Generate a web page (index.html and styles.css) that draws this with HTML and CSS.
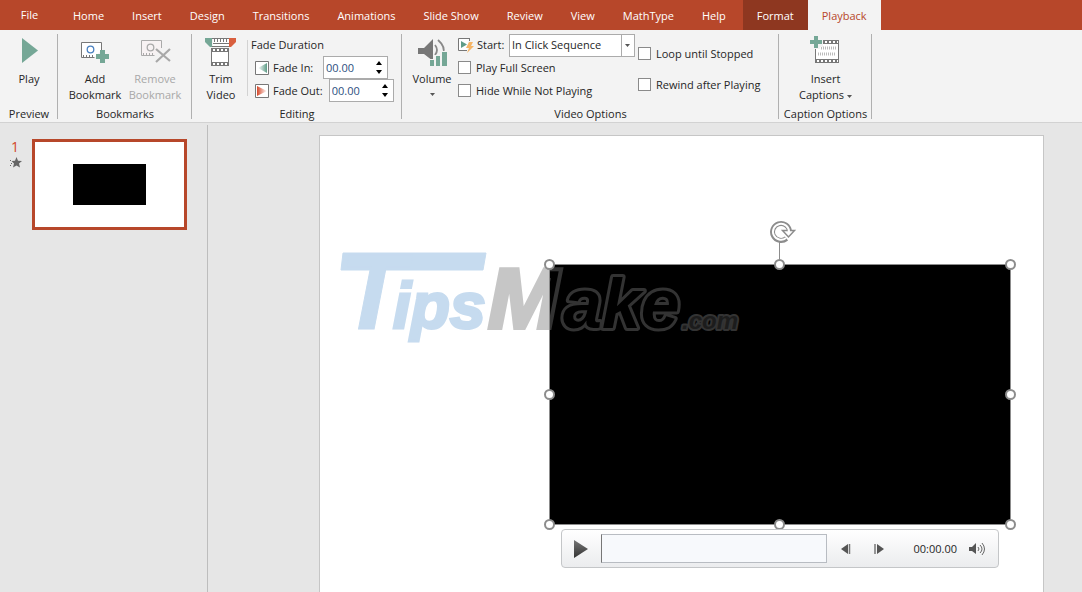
FILE: index.html
```
<!DOCTYPE html>
<html lang="en">
<head>
  <meta charset="UTF-8" />
  <meta name="viewport" content="width=device-width, initial-scale=1.0"/>
  <title>Playback</title>
  <link rel="stylesheet" href="styles.css">
</head>
<body>
  <nav class="tabs">
    <a href="#" class="tab file">File</a>
    <a href="#" class="tab">Home</a>
    <a href="#" class="tab">Insert</a>
    <a href="#" class="tab">Design</a>
    <a href="#" class="tab">Transitions</a>
    <a href="#" class="tab">Animations</a>
    <a href="#" class="tab">Slide Show</a>
    <a href="#" class="tab">Review</a>
    <a href="#" class="tab">View</a>
    <a href="#" class="tab">MathType</a>
    <a href="#" class="tab">Help</a>
    <a href="#" class="tab format">Format</a>
    <a href="#" class="tab active">Playback</a>
  </nav>

  <div class="ribbon">
    <section class="group preview">
      <div class="group-body">
        <button class="tool">
          <svg width="32" height="32" viewBox="0 0 32 32"><path d="M9 4v25l16-12.500z" fill="#75a796"/></svg>
          <span>Play</span>
        </button>
      </div>
      <h2>Preview</h2>
    </section>

    <section class="group bookmarks">
      <div class="group-body">
        <button class="tool">
          <svg width="32" height="32" viewBox="0 0 32 32">
            <path d="M22.500 16V8.500h-20v15h13" fill="#fff" stroke="#777"/>
            <path d="M4.500 21v2M7.500 21v2M10.500 21v2M13.500 21v2" stroke="#777"/>
            <circle cx="11.500" cy="15.500" r="3.300" fill="none" stroke="#4a80c0" stroke-width="1.300"/>
            <path d="M21 16h5v4h4v5h-4v4h-5v-4h-4v-5h4z" fill="#75a796"/>
          </svg>
          <span>Add<br>Bookmark</span>
        </button>
        <button class="tool" disabled>
          <svg width="32" height="32" viewBox="0 0 32 32">
            <path d="M22.500 14V6.500h-20v15h13" fill="#f7f2f3" stroke="#aaa"/>
            <path d="M4.500 19v2M7.500 19v2M10.500 19v2M13.500 19v2" stroke="#aaa"/>
            <circle cx="11.500" cy="13.500" r="3.300" fill="none" stroke="#aaa" stroke-width="1.300"/>
            <path d="M17 15l14 12M31 15L17 28" stroke="#a8a8a8" stroke-width="2.200"/>
          </svg>
          <span>Remove<br>Bookmark</span>
        </button>
      </div>
      <h2>Bookmarks</h2>
    </section>

    <section class="group editing">
      <div class="group-body">
        <button class="tool">
          <svg width="32" height="32" viewBox="0 0 32 32">
            <path d="M6 4.500h20M7 12.500h18" stroke="#777"/>
            <path d="M8 5h16v7H8z" fill="#fff"/>
            <path d="M9.500 5v3M12.500 5v3M15.500 5v3M18.500 5v3M21.500 5v3" stroke="#777"/>
            <path d="M8 9.500h16" stroke="#777"/>
            <path d="M0 4h7v9H5L0 8z" fill="#75a796"/>
            <path d="M31 4h-7v9h2l5-5z" fill="#d95f3e"/>
            <path d="M6 14h18v18H6z" fill="#777"/>
            <path d="M7 18h16v10H7z" fill="#fff"/>
            <path d="M8 16h15M8 30h15" stroke="#fff" stroke-width="2" stroke-dasharray="2 2"/>
          </svg>
          <span>Trim<br>Video</span>
        </button>
        <div class="fades">
          <h3>Fade Duration</h3>
          <div class="fade-row">
            <svg width="14" height="14" viewBox="0 0 14 14">
              <defs><linearGradient id="fin"><stop offset="0" stop-color="#fff"/><stop offset="1" stop-color="#5f9c87"/></linearGradient></defs>
              <path d="M.5.5h13v13H.5z" fill="#fff" stroke="#777"/><path d="M12 2v10L3 7z" fill="url(#fin)"/>
            </svg>
            <label for="fade-in">Fade In:</label>
            <div class="spinner">
              <input id="fade-in" type="text" value="00.00">
              <div class="arrows">
                <button aria-label="Increase fade in"><svg width="6" height="4"><path d="M0 4l3-4 3 4z"/></svg></button>
                <button aria-label="Decrease fade in"><svg width="6" height="4"><path d="M0 0l3 4 3-4z"/></svg></button>
              </div>
            </div>
          </div>
          <div class="fade-row">
            <svg width="14" height="14" viewBox="0 0 14 14">
              <defs><linearGradient id="fout"><stop offset="0" stop-color="#d5482a"/><stop offset="1" stop-color="#fff"/></linearGradient></defs>
              <path d="M.5.5h13v13H.5z" fill="#fff" stroke="#777"/><path d="M2 2v10l10-5z" fill="url(#fout)"/>
            </svg>
            <label for="fade-out">Fade Out:</label>
            <div class="spinner">
              <input id="fade-out" type="text" value="00.00">
              <div class="arrows">
                <button aria-label="Increase fade out"><svg width="6" height="4"><path d="M0 4l3-4 3 4z"/></svg></button>
                <button aria-label="Decrease fade out"><svg width="6" height="4"><path d="M0 0l3 4 3-4z"/></svg></button>
              </div>
            </div>
          </div>
        </div>
      </div>
      <h2>Editing</h2>
    </section>

    <section class="group video">
      <div class="group-body">
        <button class="tool">
          <svg width="32" height="32" viewBox="0 0 32 32">
            <path d="M2 14h6l9-9v22l-9-7H2z" fill="#777"/>
            <path d="M19 11q4 5 0 10M22 6q8 7 5 14" fill="none" stroke="#888" stroke-width="1.800"/>
            <path d="M13 25h6v9h-6zM19 21h6v12h-6zM25 17h6v16h-6z" fill="#f3f3f3"/>
            <path d="M14 26h4v7h-4zM20 22h4v10h-4zM26 18h5v14h-5z" fill="#75a796"/>
          </svg>
          <span>Volume</span>
          <svg class="caret" width="5" height="3"><path d="M0 0h5L2.500 3z"/></svg>
        </button>
        <div class="options">
          <div class="start-row">
            <svg width="16" height="16" viewBox="0 0 16 16">
              <path d="M11 1.500H.5v12H9" fill="#fff" stroke="#777"/><path d="M11.500 1v3" stroke="#777"/>
              <path d="M3 4v7l6-3.500z" fill="#5f9c87"/>
              <path d="M11 5h4l-2 4h3l-7 7 2-5H8z" fill="#f6b565"/>
            </svg>
            <label for="start">Start:</label>
            <div class="dropdown">
              <select id="start"><option>In Click Sequence</option></select>
              <svg width="5" height="3"><path d="M0 0h5L2.500 3z"/></svg>
            </div>
          </div>
          <label class="check"><input type="checkbox">Play Full Screen</label>
          <label class="check"><input type="checkbox">Hide While Not Playing</label>
        </div>
        <div class="options loops">
          <label class="check"><input type="checkbox">Loop until Stopped</label>
          <label class="check"><input type="checkbox">Rewind after Playing</label>
        </div>
      </div>
      <h2>Video Options</h2>
    </section>

    <section class="group captions">
      <div class="group-body">
        <button class="tool">
          <svg width="32" height="32" viewBox="0 0 32 32">
            <path d="M5 6h24v23H5z" fill="#777"/>
            <path d="M6 10h22v15H6z" fill="#fff"/>
            <path d="M7 8h21M7 27h21" stroke="#fff" stroke-width="2" stroke-dasharray="2 2"/>
            <path d="M11 14h15M8 20h18" stroke="#bbb" stroke-width="3" stroke-dasharray="1 1"/>
            <path d="M2 1h8v4h3v8h-3v2H2z" fill="#f3f3f3"/>
            <path d="M4 2h4v4h4v4H8v4H4v-4H0V6h4z" fill="#75a796"/>
          </svg>
          <span>Insert<br>Captions <svg class="inline-caret" width="5" height="3"><path d="M0 0h5L2.500 3z"/></svg></span>
        </button>
      </div>
      <h2>Caption Options</h2>
    </section>
  </div>

  <main class="workspace">
    <aside class="slides">
      <div class="slide-info">
        <span class="number">1</span>
        <svg width="12" height="11" viewBox="0 0 12 11"><path d="M6.500 0L8 3.700l4 .3-3 2.600 1 4-3.500-2.200-3.500 2.200 1-4L1.500 4 5 3.700z" fill="#666"/><path d="M0 3h1v1H0zM1 6h1v1H1zM0 8h1v1H0z" fill="#666"/></svg>
      </div>
      <button class="thumb" aria-label="Slide 1"><span class="thumb-video"></span></button>
    </aside>

    <div class="stage">
      <div class="slide">
        <div class="movie"></div>
        <svg class="watermark" width="420" height="130" viewBox="330 220 420 130">
          <defs>
            <linearGradient id="mfill" gradientUnits="userSpaceOnUse" x1="549" y1="0" x2="550" y2="0">
              <stop offset="0" stop-color="#c6c6c6"/><stop offset="1" stop-color="#000"/>
            </linearGradient>
            <linearGradient id="mline" gradientUnits="userSpaceOnUse" x1="549" y1="0" x2="550" y2="0">
              <stop offset="0" stop-color="#c6c6c6"/><stop offset="1" stop-color="#333"/>
            </linearGradient>
          </defs>
          <path class="blue" d="M343 253h143l-3 17H341z"/>
          <text>
            <tspan class="blue" x="339" y="329" font-size="108">T</tspan><tspan class="blue" x="393" y="328" font-size="64" stroke-width="3">ips</tspan><tspan x="488" y="328" font-size="86" fill="url(#mfill)" stroke="url(#mline)" stroke-width="4">M</tspan><tspan class="dark" x="563" y="328" font-size="70" stroke-width="6">ake</tspan><tspan class="dark com" x="682" y="329" font-size="24" stroke-width="4">.com</tspan>
          </text>
        </svg>
        <div class="selection">
          <svg class="rotate" width="28" height="24" viewBox="0 0 28 24">
            <path d="M17.500 18.500A8.500 8.500 0 1 1 20.500 11" fill="none" stroke="#8c8c8c" stroke-width="5"/>
            <path d="M13.500 10.500h12l-6 6.500z" fill="#fff" stroke="#8c8c8c" stroke-width="1.500"/>
            <path d="M17 18A8 8 0 1 1 20 12" fill="none" stroke="#fff" stroke-width="2"/>
          </svg>
          <i class="stem"></i>
          <i class="handle nw"></i><i class="handle n"></i><i class="handle ne"></i>
          <i class="handle w"></i><i class="handle e"></i>
          <i class="handle sw"></i><i class="handle s"></i><i class="handle se"></i>
        </div>
        <div class="player">
          <button aria-label="Play"><svg width="14" height="18"><defs><linearGradient id="pg" x2="0" y2="1"><stop offset="0" stop-color="#777"/><stop offset="1" stop-color="#333"/></linearGradient></defs><path d="M0 0l14 9-14 9z" fill="url(#pg)"/></svg></button>
          <div class="seek"></div>
          <button aria-label="Step back"><svg width="10" height="10"><path d="M7 0v10L0 5z" fill="#555"/><path d="M8.500 0v10" stroke="#777" stroke-width="1.500"/></svg></button>
          <button aria-label="Step forward"><svg width="10" height="10"><path d="M3 0v10l7-5z" fill="#555"/><path d="M1 0v10" stroke="#777" stroke-width="1.500"/></svg></button>
          <time>00:00.00</time>
          <button aria-label="Mute"><svg width="16" height="12" viewBox="0 0 16 12"><path d="M0 4h3l4-4v11L3 8H0z" fill="#555"/><path d="M9 4q2 2 0 4M11 2q4 4 0 8M13 0q5 6 0 12" fill="none" stroke="#666"/></svg></button>
        </div>
      </div>
    </div>
  </main>
</body>
</html>
```
FILE: styles.css
```
* {
  box-sizing: border-box;
}

body {
  margin: 0;
  min-height: 100vh;
  display: flex;
  flex-direction: column;
  font-family: "Open Sans", "Noto Sans", sans-serif;
  font-size: 11px;
  line-height: 16px;
  color: #262626;
  background: #e6e6e6;
}

h2, h3 {
  margin: 0;
  font-size: 11px;
  font-weight: normal;
}

button {
  padding: 0;
  border: none;
  background: none;
  font: inherit;
  color: inherit;
}

svg {
  display: block;
}

/* tabs */
.tabs {
  display: flex;
  height: 30px;
  background: #b7472a;
}

.tab {
  padding: 0 14px;
  line-height: 32px;
  color: white;
  text-decoration: none;
  white-space: nowrap;
}

.file {
  width: 59px;
  padding: 0;
  line-height: 30px;
  text-align: center;
}

.format {
  margin-left: 3px;
  background: #8e3720;
}

.active {
  background: #f3f3f3;
  color: #b7472a;
}

/* ribbon */
.ribbon {
  display: flex;
  height: 93px;
  padding-top: 4px;
  background: #f3f3f3;
  border-bottom: 1px solid #d2d2d2;
}

.group {
  position: relative;
  display: flex;
  flex-direction: column;
  flex-shrink: 0;
  white-space: nowrap;
}

.group::after {
  content: "";
  position: absolute;
  top: 0;
  right: 0;
  bottom: 3px;
  border-right: 1px solid #b0b0b0;
}

.group-body {
  flex: 1;
  display: flex;
  justify-content: center;
}

.group h2 {
  line-height: 16px;
  text-align: center;
}

.preview { width: 58px; }
.bookmarks { width: 134px; }
.editing { width: 210px; }
.video { width: 377px; }
.captions { width: 93px; }

.tool {
  display: flex;
  flex-direction: column;
  align-items: center;
  width: 60px;
}

.tool > span {
  margin-top: 5px;
}

.tool:disabled {
  color: #a8a8a8;
}

.caret {
  margin-top: 6px;
  fill: #555;
}

.inline-caret {
  display: inline-block;
  vertical-align: middle;
  fill: #555;
}

.editing .group-body {
  justify-content: flex-start;
}

.editing .tool {
  width: 55px;
  padding-left: 3px;
}

.fades {
  padding-left: 4px;
  background: linear-gradient(#d2d2d2, #d2d2d2) 0 6px / 1px 56px no-repeat;
}

.fades h3 {
  line-height: 22px;
}

.fade-row {
  display: flex;
  align-items: center;
  height: 23px;
  padding-left: 4px;
}

.fade-row label {
  min-width: 44px;
  margin: 0 6px 0 4px;
}

.spinner {
  display: flex;
  width: 65px;
  height: 23px;
  border: 1px solid #ababab;
  background: white;
}

.spinner input {
  flex: 1;
  min-width: 0;
  padding: 0 2px;
  border: none;
  background: none;
  font: inherit;
  color: #2d4f80;
}

.arrows {
  display: flex;
  flex-direction: column;
  align-items: center;
  justify-content: center;
  gap: 5px;
  width: 16px;
}

.video .group-body {
  justify-content: flex-start;
}

.options {
  display: flex;
  flex-direction: column;
  width: 180px;
  margin-left: -4px;
}

.start-row {
  display: flex;
  align-items: center;
  height: 22px;
}

.start-row label {
  flex: 1;
  margin-left: 3px;
}

.dropdown {
  display: grid;
  align-items: center;
  width: 126px;
  height: 23px;
  margin-right: 3px;
  border: 1px solid #ababab;
  background: linear-gradient(#ababab, #ababab) 111px 0 / 1px 100% no-repeat white;
}

.dropdown select,
.dropdown svg {
  grid-area: 1 / 1;
}

.dropdown svg {
  justify-self: end;
  margin-right: 4px;
  fill: #555;
}

.dropdown select {
  appearance: none;
  width: 100%;
  padding: 0 2px;
  border: none;
  background: none;
  font: inherit;
  color: inherit;
}

.check {
  display: flex;
  align-items: center;
  gap: 5px;
  height: 23px;
}

.check input {
  appearance: none;
  width: 13px;
  height: 13px;
  margin: 0;
  border: 1px solid #8a8a8a;
  background: white;
}

.loops {
  gap: 8px;
  width: auto;
  margin-left: 0;
  padding-top: 8px;
}

/* workspace */
.workspace {
  flex: 1;
  display: flex;
}

.slides {
  display: flex;
  align-items: flex-start;
  gap: 12px;
  width: 208px;
  margin-top: 2px;
  padding: 14px 20px 0 10px;
  border-right: 1px solid #bdbdbd;
}

.slide-info {
  width: 10px;
}

.number {
  display: block;
  margin-bottom: 2px;
  font-size: 14px;
  color: #d24726;
  text-align: center;
}

.thumb {
  display: flex;
  align-items: center;
  justify-content: center;
  width: 155px;
  height: 91px;
  border: 3px solid #b7472a;
  background: white;
}

.thumb-video {
  width: 73px;
  height: 41px;
  background: black;
}

.stage {
  flex: 1;
  display: flex;
  padding: 12px 38px 0 111px;
}

.slide {
  position: relative;
  flex: 1;
  border: 1px solid #c6c6c6;
  border-bottom: none;
  background: white;
}

/* objects placed on the slide */
.movie,
.selection {
  position: absolute;
  left: 229px;
  top: 128px;
  width: 462px;
  height: 261px;
}

.movie {
  background: black;
}

.selection {
  border: 1px solid #8c8c8c;
}

.watermark {
  position: absolute;
  left: 10px;
  top: 84px;
  font-family: "Liberation Sans", sans-serif;
  font-weight: bold;
  font-style: italic;
}

.blue {
  fill: #c6dbef;
  stroke: #c6dbef;
}

.dark {
  fill: black;
  stroke: #333;
  paint-order: stroke;
  stroke-linejoin: round;
}

.com {
  fill: #1c1c1c;
}

.handle {
  position: absolute;
  width: 11px;
  height: 11px;
  margin: -6px;
  border: 2px solid #8c8c8c;
  border-radius: 50%;
  background: white;
}

.nw, .n, .ne { top: 0; }
.w, .e { top: 50%; }
.sw, .s, .se { top: 100%; margin-top: -5px; }
.nw, .w, .sw { left: 0; }
.n, .s { left: 50%; }
.ne, .e, .se { left: 100%; margin-left: -5px; }

.stem {
  position: absolute;
  left: 50%;
  top: -24px;
  height: 18px;
  margin-left: -1px;
  border-left: 1px solid #8c8c8c;
}

.rotate {
  position: absolute;
  left: 219px;
  top: -45px;
}

.player {
  position: absolute;
  left: 241px;
  top: 393px;
  display: flex;
  align-items: center;
  width: 438px;
  height: 39px;
  padding: 0 13px 0 12px;
  border: 1px solid #c4c6c8;
  border-radius: 4px;
  background: linear-gradient(#fff, #ebecee);
}

.seek {
  flex: 1;
  height: 29px;
  margin: 0 14px 0 13px;
  border: 1px solid #b8bcc2;
  border-left-color: #777;
  background: #f7f9fc;
}

.player button + button {
  margin-left: 23px;
}

.player time {
  margin: 0 12px 0 29px;
}
```
